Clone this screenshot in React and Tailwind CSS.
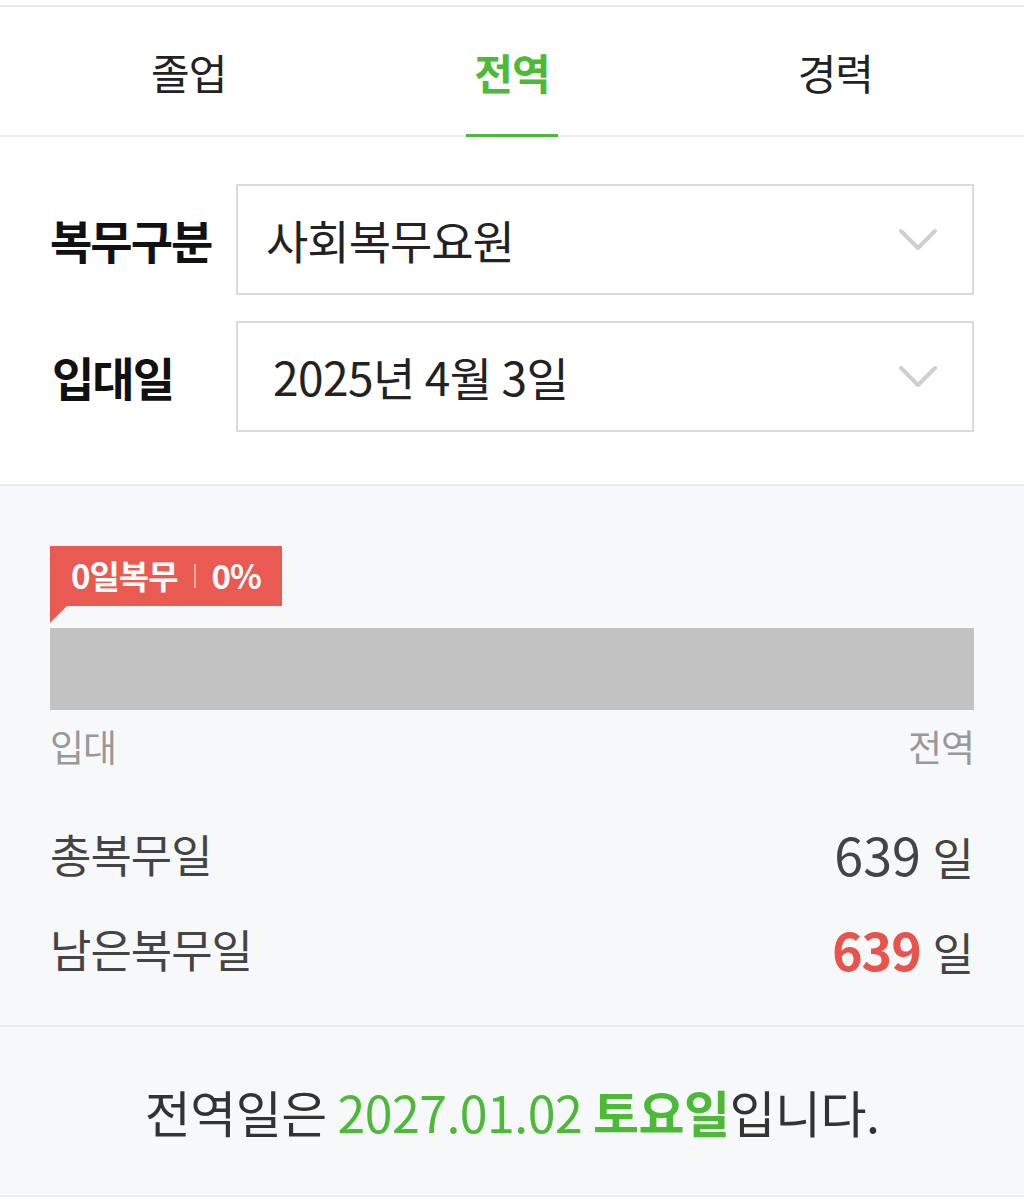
import React from "react";

function Chevron() {
  return (
    <svg width="40" height="24" viewBox="0 0 40 24" className="shrink-0">
      <path d="M3 3 L20 20 L37 3" fill="none" stroke="#cfcfcf" strokeWidth="4" strokeLinecap="round" strokeLinejoin="round" />
    </svg>
  );
}

export default function App() {
  return (
    <div className="w-[1024px] h-[1200px] bg-white overflow-hidden" style={{ fontFamily: '"Noto Sans CJK KR", "Noto Sans", sans-serif' }}>
      <div className="h-[5px] bg-white" />
      <div className="border-t-2 border-b-2 border-[#e8ecef] flex h-[132px] px-[27px]">
        <div className="flex-1 flex items-center justify-center text-[42px] text-[#222] tracking-[-1px]">졸업</div>
        <div className="flex-1 flex items-center justify-center relative text-[42px] font-bold text-[#4cb937] tracking-[-1px]">
          전역
          <div className="absolute left-1/2 -translate-x-1/2 bottom-[-2px] w-[92px] h-[3px] bg-[#4cb937]" />
        </div>
        <div className="flex-1 flex items-center justify-center text-[42px] text-[#222] tracking-[-1px]">경력</div>
      </div>

      <div className="pt-[47px] pb-[52px] px-[50px] flex flex-col gap-[26px] border-b-2 border-[#e8ebee]">
        <div className="flex items-center">
          <div className="w-[186px] text-[46px] font-bold text-[#111] tracking-[-2px]">복무구분</div>
          <div className="flex-1 h-[111px] border-2 border-[#dadada] flex items-center justify-between pl-[28px] pr-[34px]">
            <span className="text-[46px] text-[#222] tracking-[-1px]">사회복무요원</span>
            <Chevron />
          </div>
        </div>
        <div className="flex items-center">
          <div className="w-[186px] pl-[2px] text-[46px] font-bold text-[#111] tracking-[-2px]">입대일</div>
          <div className="flex-1 h-[111px] border-2 border-[#dadada] flex items-center justify-between pl-[35px] pr-[34px]">
            <span className="text-[46px] text-[#222] tracking-[-0.5px]">2025년 4월 3일</span>
            <Chevron />
          </div>
        </div>
      </div>

      <div className="bg-[#f7f8fa] px-[50px] pt-[60px] pb-[44px] border-b-2 border-[#e8eaed]">
        <div className="relative inline-flex">
          <div className="h-[60px] bg-[#e95a52] flex items-center px-[21px] text-white font-bold text-[33px] tracking-[-1px]">
            <span>0일복무</span>
            <span className="mx-[16px] w-[2px] h-[24px] bg-[#f5aaa4]" />
            <span>0%</span>
          </div>
          <svg className="absolute left-0 top-[60px]" width="18" height="18" viewBox="0 0 18 18">
            <path d="M0 0 L17 0 L0 17 Z" fill="#e95a52" />
          </svg>
        </div>
        <div className="mt-[22px] h-[82px] bg-[#c2c2c2]" />
        <div className="flex justify-between mt-[12px] text-[37px] text-[#999] tracking-[-1px] leading-[48px]">
          <span>입대</span>
          <span>전역</span>
        </div>
        <div className="mt-[52px] flex justify-between items-center h-[64px]">
          <span className="text-[45px] text-[#444] tracking-[-1px]">총복무일</span>
          <span className="text-[52px] text-[#444]">639 <span className="text-[45px]">일</span></span>
        </div>
        <div className="mt-[31px] flex justify-between items-center h-[64px]">
          <span className="text-[45px] text-[#444] tracking-[-1px]">남은복무일</span>
          <span className="text-[52px] text-[#444]"><span className="font-bold text-[#e8534b] tracking-[-1px]">639</span> <span className="text-[45px]">일</span></span>
        </div>
      </div>

      <div className="bg-[#f7f8fa] h-[170px] flex items-center justify-center border-b-2 border-[#eceef1]">
        <span className="text-[50px] text-[#333] tracking-[-0.5px]">
          전역일은 <span className="text-[#4cb937]">2027.01.02</span> <span className="text-[#4cb937] font-bold">토요일</span>입니다.
        </span>
      </div>
    </div>
  );
}
